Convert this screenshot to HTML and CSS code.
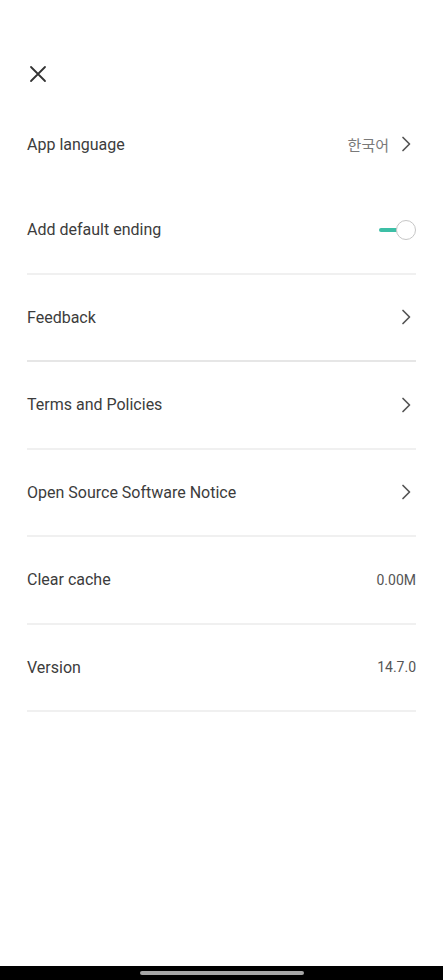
FILE: index.html
```html
<!DOCTYPE html>
<html lang="en">
<head>
<meta charset="utf-8">
<title>Settings</title>
<link rel="stylesheet" href="styles.css">
</head>
<body>
<div class="screen">
  <header class="header">
    <button class="close" aria-label="Close">
      <svg width="18" height="18" viewBox="0 0 18 18"><path d="M2 2 L16 16 M16 2 L2 16" stroke="#333" stroke-width="1.8" stroke-linecap="round" fill="none"/></svg>
    </button>
  </header>
  <ul class="list">
    <li class="row plain">
      <span class="label">App language</span>
      <span class="trail"><span class="lang">한국어</span><svg class="chev" width="10" height="16" viewBox="0 0 10 16"><path d="M2 1.5 L8.5 8 L2 14.5" stroke="#555" stroke-width="1.7" fill="none" stroke-linecap="round" stroke-linejoin="round"/></svg></span>
    </li>
    <li class="row">
      <span class="label">Add default ending</span>
      <span class="toggle"><span class="track"></span><span class="knob"></span></span>
    </li>
    <li class="row strong">
      <span class="label">Feedback</span>
      <svg class="chev" width="10" height="16" viewBox="0 0 10 16"><path d="M2 1.5 L8.5 8 L2 14.5" stroke="#555" stroke-width="1.7" fill="none" stroke-linecap="round" stroke-linejoin="round"/></svg>
    </li>
    <li class="row">
      <span class="label">Terms and Policies</span>
      <svg class="chev" width="10" height="16" viewBox="0 0 10 16"><path d="M2 1.5 L8.5 8 L2 14.5" stroke="#555" stroke-width="1.7" fill="none" stroke-linecap="round" stroke-linejoin="round"/></svg>
    </li>
    <li class="row">
      <span class="label">Open Source Software Notice</span>
      <svg class="chev" width="10" height="16" viewBox="0 0 10 16"><path d="M2 1.5 L8.5 8 L2 14.5" stroke="#555" stroke-width="1.7" fill="none" stroke-linecap="round" stroke-linejoin="round"/></svg>
    </li>
    <li class="row">
      <span class="label">Clear cache</span>
      <span class="value">0.00M</span>
    </li>
    <li class="row">
      <span class="label">Version</span>
      <span class="value">14.7.0</span>
    </li>
  </ul>
  <div class="spacer"></div>
  <div class="navbar"><span class="pill"></span></div>
</div>
</body>
</html>
```
FILE: styles.css
```css
* { box-sizing: border-box; }
html, body { margin: 0; padding: 0; }
body {
  background: #fff;
  font-family: Roboto, "Noto Sans", "Noto Sans CJK KR", sans-serif;
  color: #3a3a3a;
}
.screen {
  width: 443px;
  height: 980px;
  display: flex;
  flex-direction: column;
}
.header {
  height: 101px;
  display: flex;
  align-items: center;
  padding: 46px 0 0 29px;
}
.close {
  border: 0;
  background: none;
  padding: 0;
  width: 18px;
  height: 18px;
  display: flex;
}
.list {
  list-style: none;
  margin: 0;
  padding: 0 27px;
}
.row {
  height: 87.5px;
  display: flex;
  align-items: center;
  justify-content: space-between;
  border-bottom: 2px solid #f0f0f0;
}
.row.plain { height: 86px; border-bottom: 0; }
.row.strong { border-bottom-color: #e6e6e6; }
.label {
  font-size: 16px;
  color: #3c3c3c;
}
.trail {
  display: flex;
  align-items: center;
  gap: 12px;
}
.lang {
  font-family: "Noto Sans CJK KR", sans-serif;
  font-size: 15px;
  color: #7a7a7a;
}
.chev { display: block; margin-right: 5px; }
.value {
  font-size: 14px;
  color: #555;
}
.toggle {
  display: flex;
  align-items: center;
}
.track {
  width: 19px;
  height: 4px;
  border-radius: 2px;
  background: #3dbfa6;
  margin-right: -2px;
}
.knob {
  width: 20px;
  height: 20px;
  border-radius: 50%;
  background: #fff;
  border: 1.5px solid #c6c6c6;
}
.spacer { flex: 1; }
.navbar {
  height: 14px;
  background: #000;
  display: flex;
  justify-content: center;
  align-items: center;
}
.pill {
  width: 164px;
  height: 4px;
  border-radius: 2px;
  background: #a6a6a6;
}
```
